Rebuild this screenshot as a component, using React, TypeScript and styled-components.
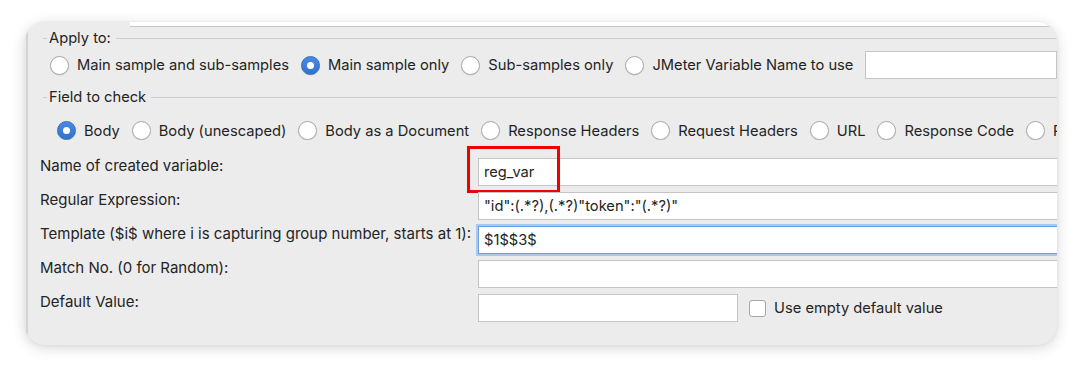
import React from 'react';
import styled, { createGlobalStyle } from 'styled-components';

const GlobalStyle = createGlobalStyle`
  html, body {
    margin: 0;
    padding: 0;
    background: #ffffff;
  }
  body {
    font-family: Inter, "Noto Sans", "Liberation Sans", sans-serif;
    color: #242424;
  }
`;

const Page = styled.div`
  width: 1080px;
  height: 368px;
  padding: 22px 0 0 25px;
  box-sizing: border-box;
  overflow: hidden;
`;

const Card = styled.div`
  width: 1032px;
  height: 323px;
  border-radius: 20px;
  background: #ececec;
  box-shadow: 0 3px 14px rgba(0, 0, 0, 0.16), 0 0 3px rgba(0, 0, 0, 0.06);
  overflow: hidden;
  position: relative;
`;

const Inner = styled.div`
  height: 100%;
  border-left: 2px solid #d3d3d3;
  margin-left: 1px;
  display: flex;
  flex-direction: column;
`;

const TopStrip = styled.div`
  height: 5px;
  padding-left: 102px;
  display: flex;
`;

const CutField = styled.div`
  flex: 1;
  background: #ffffff;
  border-bottom: 1px solid #c9c9c9;
`;

const Legend = styled.div<{ $top: number }>`
  display: flex;
  align-items: center;
  gap: 2px;
  height: 18px;
  margin-top: ${({ $top }) => $top}px;
  padding-left: 15px;
  font-size: 14.7px;
  line-height: 18px;

  &::before {
    content: '';
    width: 4px;
    height: 1px;
    background: #cfcfcf;
  }

  &::after {
    content: '';
    flex: 1;
    height: 1px;
    margin-left: 3px;
    background: #cfcfcf;
  }
`;

const RadioRow = styled.div<{ $top: number; $left: number }>`
  display: flex;
  align-items: center;
  gap: 12px;
  margin-top: ${({ $top }) => $top}px;
  padding-left: ${({ $left }) => $left}px;
  font-size: 14.7px;
  white-space: nowrap;
  overflow: hidden;
`;

const RadioItem = styled.label`
  display: flex;
  align-items: center;
  gap: 8px;
  flex-shrink: 0;
`;

const RadioDot = styled.span<{ $checked?: boolean }>`
  width: 19px;
  height: 19px;
  box-sizing: border-box;
  border-radius: 50%;
  flex-shrink: 0;
  display: flex;
  align-items: center;
  justify-content: center;
  background: ${({ $checked }) =>
    $checked ? 'linear-gradient(#4a8ae0, #3272cc)' : '#ffffff'};
  border: 1px solid ${({ $checked }) => ($checked ? '#2f6cc0' : '#a9a9a9')};
  box-shadow: 0 0.5px 1px rgba(0, 0, 0, 0.12);

  &::after {
    content: '';
    display: ${({ $checked }) => ($checked ? 'block' : 'none')};
    width: 7px;
    height: 7px;
    border-radius: 50%;
    background: #ffffff;
  }
`;

const TextBox = styled.div<{ $width?: number; $focused?: boolean }>`
  height: 28px;
  box-sizing: border-box;
  background: #ffffff;
  border: 1px solid #c4c4c4;
  padding-left: 5px;
  display: flex;
  align-items: center;
  font-size: 14.7px;
  white-space: nowrap;
  flex: ${({ $width }) => ($width ? `0 0 ${$width}px` : '1')};
  position: relative;
  ${({ $focused }) =>
    $focused &&
    `
    border: 1px solid #6f9fdc;
    box-shadow: 0 0 0 2px #a9c8ef;
  `}
`;

const Form = styled.div`
  margin-top: 18px;
  display: grid;
  grid-template-columns: 438px 1fr;
  row-gap: 6px;
  padding-left: 12px;
`;

const FieldLabel = styled.div`
  font-size: 15px;
  line-height: 16px;
  white-space: nowrap;
  align-self: start;
`;

const FieldCell = styled.div`
  display: flex;
  align-items: center;
  margin-right: -4px;
`;

const Highlight = styled.div`
  position: absolute;
  left: -12px;
  top: -13px;
  width: 93px;
  height: 47px;
  box-sizing: border-box;
  border: 3px solid #f20000;
  pointer-events: none;
`;

const CheckBox = styled.span`
  width: 17px;
  height: 17px;
  box-sizing: border-box;
  border: 1px solid #a6a6a6;
  border-radius: 3px;
  background: #ffffff;
  margin-left: 11px;
  margin-right: 8px;
  flex-shrink: 0;
`;

const CheckText = styled.span`
  font-size: 14.7px;
  white-space: nowrap;
`;

const applyTo = [
  { label: 'Main sample and sub-samples', checked: false },
  { label: 'Main sample only', checked: true },
  { label: 'Sub-samples only', checked: false },
  { label: 'JMeter Variable Name to use', checked: false },
];

const fields = [
  'Body',
  'Body (unescaped)',
  'Body as a Document',
  'Response Headers',
  'Request Headers',
  'URL',
  'Response Code',
  'Response Message',
];

const App: React.FC = () => {
  return (
    <>
      <GlobalStyle />
      <Page>
        <Card>
          <Inner>
            <TopStrip>
              <CutField />
            </TopStrip>

            <Legend $top={2}>Apply to:</Legend>
            <RadioRow $top={4} $left={22}>
              {applyTo.map((item) => (
                <RadioItem key={item.label}>
                  <RadioDot $checked={item.checked} />
                  {item.label}
                </RadioItem>
              ))}
              <TextBox />
            </RadioRow>

            <Legend $top={9}>Field to check</Legend>
            <RadioRow $top={15} $left={29}>
              {fields.map((label, i) => (
                <RadioItem key={label}>
                  <RadioDot $checked={i === 0} />
                  {label}
                </RadioItem>
              ))}
            </RadioRow>

            <Form>
              <FieldLabel>Name of created variable:</FieldLabel>
              <FieldCell>
                <TextBox>
                  reg_var
                  <Highlight />
                </TextBox>
              </FieldCell>

              <FieldLabel>Regular Expression:</FieldLabel>
              <FieldCell>
                <TextBox>"id":(.*?),(.*?)"token":"(.*?)"</TextBox>
              </FieldCell>

              <FieldLabel>Template ($i$ where i is capturing group number, starts at 1):</FieldLabel>
              <FieldCell>
                <TextBox $focused>$1$$3$</TextBox>
              </FieldCell>

              <FieldLabel>Match No. (0 for Random):</FieldLabel>
              <FieldCell>
                <TextBox />
              </FieldCell>

              <FieldLabel>Default Value:</FieldLabel>
              <FieldCell>
                <TextBox $width={260} />
                <CheckBox />
                <CheckText>Use empty default value</CheckText>
              </FieldCell>
            </Form>
          </Inner>
        </Card>
      </Page>
    </>
  );
};

export default App;
